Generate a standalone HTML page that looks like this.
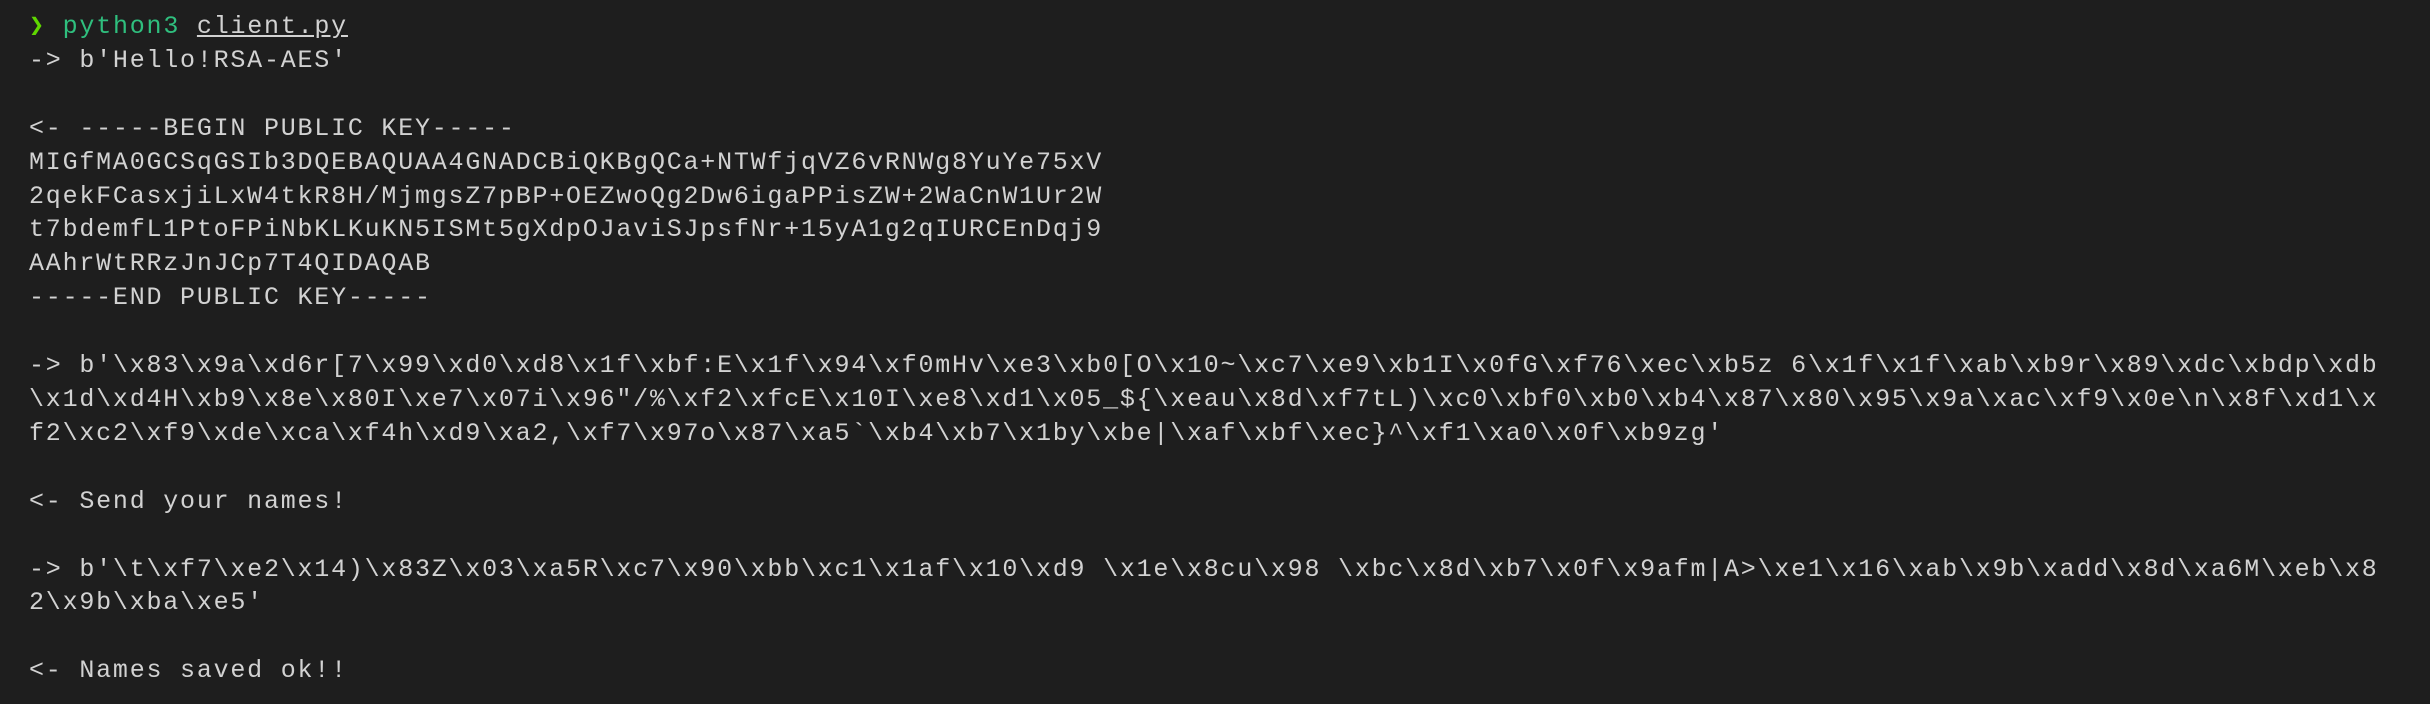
<!DOCTYPE html>
<html><head><meta charset="utf-8"><style>
html,body{margin:0;padding:0;background:#1e1e1e;width:2430px;height:704px;overflow:hidden}
pre{margin:0;position:absolute;left:29px;top:10px;font-family:"Liberation Mono","DejaVu Sans Mono",monospace;font-size:25px;line-height:33.9px;letter-spacing:1.78px;color:#d2d2d2;white-space:pre}
.p{color:#5fd700}.g{color:#2fbf7e}.u{text-decoration:underline}
</style></head><body><pre><span class="p">❯</span> <span class="g">python3</span> <span class="u">client.py</span>
-&gt; b'Hello!RSA-AES'

&lt;- -----BEGIN PUBLIC KEY-----
MIGfMA0GCSqGSIb3DQEBAQUAA4GNADCBiQKBgQCa+NTWfjqVZ6vRNWg8YuYe75xV
2qekFCasxjiLxW4tkR8H/MjmgsZ7pBP+OEZwoQg2Dw6igaPPisZW+2WaCnW1Ur2W
t7bdemfL1PtoFPiNbKLKuKN5ISMt5gXdpOJaviSJpsfNr+15yA1g2qIURCEnDqj9
AAhrWtRRzJnJCp7T4QIDAQAB
-----END PUBLIC KEY-----

-&gt; b'\x83\x9a\xd6r[7\x99\xd0\xd8\x1f\xbf:E\x1f\x94\xf0mHv\xe3\xb0[O\x10~\xc7\xe9\xb1I\x0fG\xf76\xec\xb5z 6\x1f\x1f\xab\xb9r\x89\xdc\xbdp\xdb
\x1d\xd4H\xb9\x8e\x80I\xe7\x07i\x96"/%\xf2\xfcE\x10I\xe8\xd1\x05_${\xeau\x8d\xf7tL)\xc0\xbf0\xb0\xb4\x87\x80\x95\x9a\xac\xf9\x0e\n\x8f\xd1\x
f2\xc2\xf9\xde\xca\xf4h\xd9\xa2,\xf7\x97o\x87\xa5`\xb4\xb7\x1by\xbe|\xaf\xbf\xec}^\xf1\xa0\x0f\xb9zg'

&lt;- Send your names!

-&gt; b'\t\xf7\xe2\x14)\x83Z\x03\xa5R\xc7\x90\xbb\xc1\x1af\x10\xd9 \x1e\x8cu\x98 \xbc\x8d\xb7\x0f\x9afm|A&gt;\xe1\x16\xab\x9b\xadd\x8d\xa6M\xeb\x8
2\x9b\xba\xe5'

&lt;- Names saved ok!!</pre></body></html>
